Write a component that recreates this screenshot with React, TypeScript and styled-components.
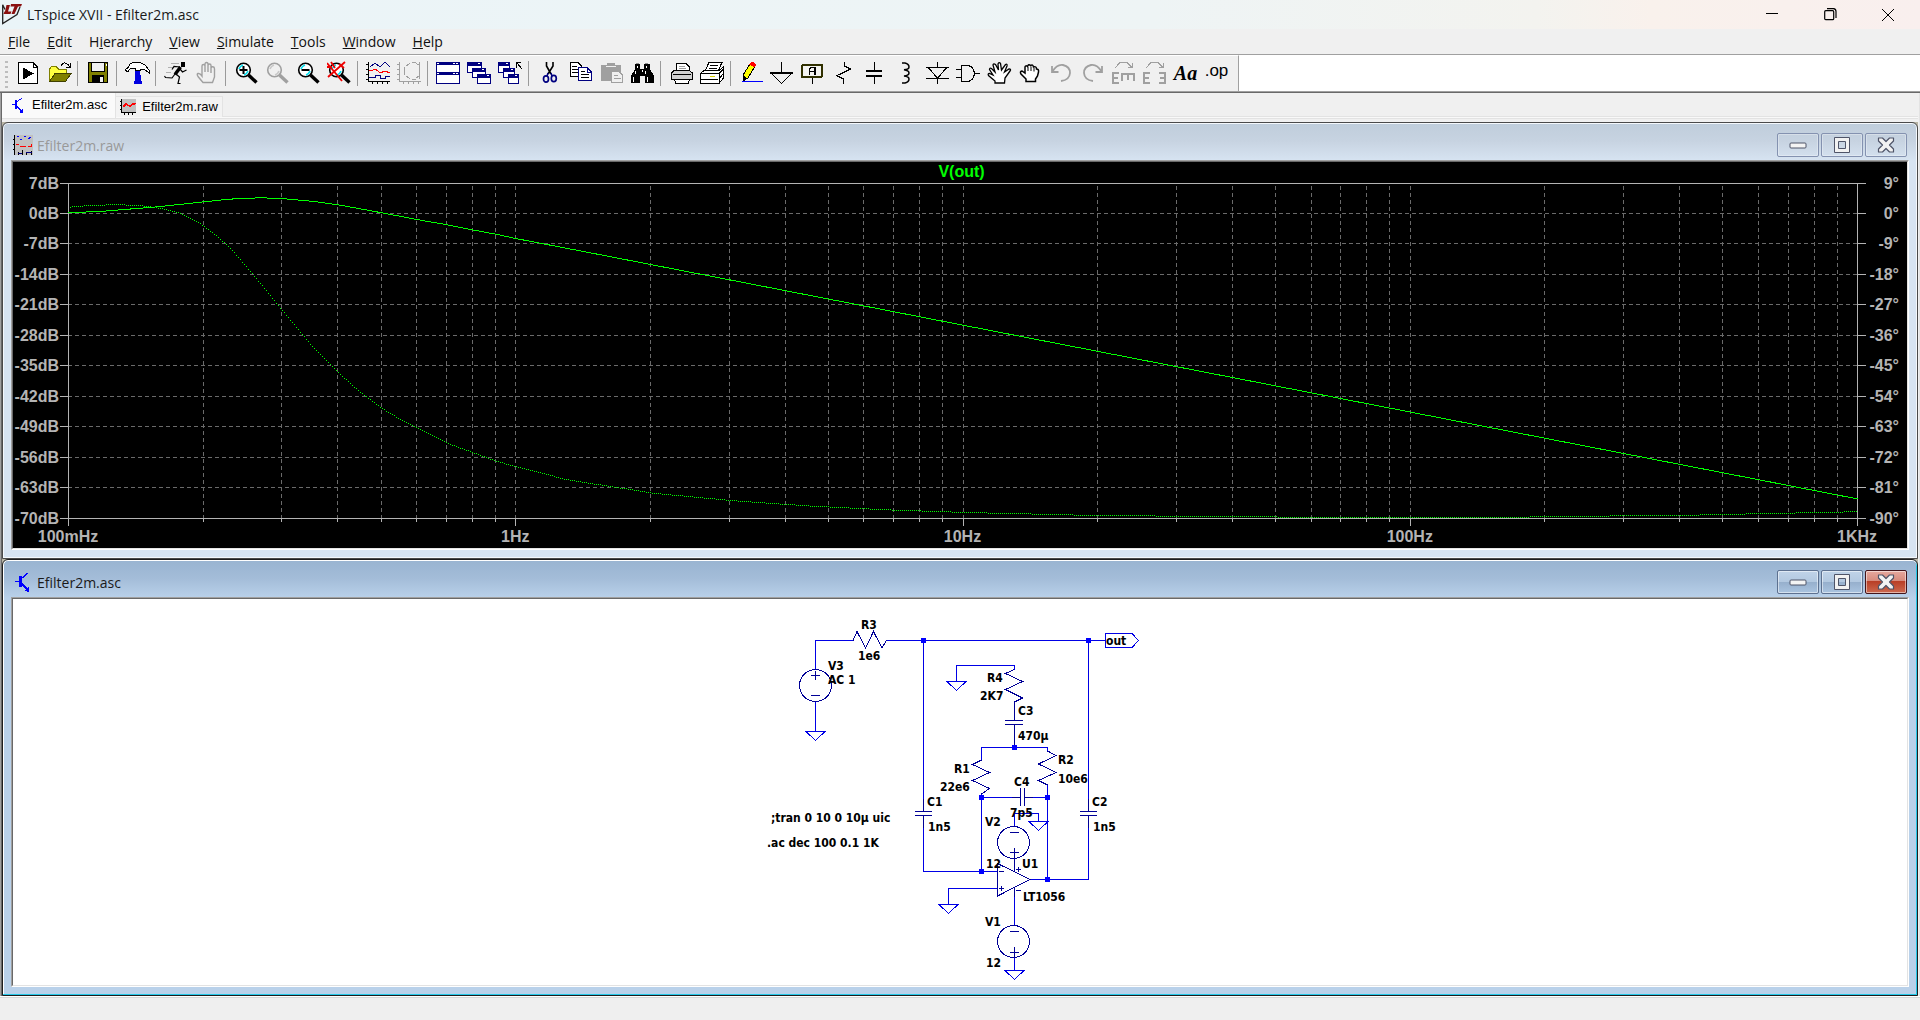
import React, { useLayoutEffect, useRef, useState } from 'react';
import styled, { createGlobalStyle, css } from 'styled-components';

const uiFont = '"Open Sans", "Noto Sans", sans-serif';
const arial = '"Liberation Sans", Arial, sans-serif';

const GlobalStyle = createGlobalStyle`
  * { box-sizing: border-box; }
  body { margin: 0; background: #f0f0f0; font-family: ${uiFont}; overflow: hidden; }
  button { font: inherit; color: inherit; margin: 0; padding: 0; border: 0; background: none; }
  svg { display: block; }
`;

/* ---------- application frame ---------- */

const App = styled.div`
  display: flex;
  flex-direction: column;
  height: 100vh;
  background: #f0f0f0;
`;

const TitleBar = styled.header`
  display: flex;
  align-items: center;
  flex: none;
  height: 29px;
  padding-left: 2px;
  background: linear-gradient(90deg, #eaf4f8 0%, #eef4f5 60%, #f3f3ef 80%, #f9f1ec 86%, #f9efee 100%);
`;

const AppTitle = styled.h1`
  flex: 1;
  margin: 0;
  padding-left: 5px;
  font-size: 14px;
  line-height: 20px;
  font-weight: 400;
  color: #1a1a1a;
`;

const FrameButton = styled.button`
  display: grid;
  place-items: center;
  width: 58px;
  height: 29px;
`;

const FrameButtons = styled.div`
  display: flex;
  padding-right: 3px;
`;

const MenuBar = styled.nav`
  display: flex;
  flex: none;
  height: 26px;
  border-bottom: 1px solid #a0a0a0;
`;

const MenuButton = styled.button`
  padding: 0 9px 0 8px;
  font-size: 14px;
  line-height: 25px;
  color: #111;
`;

const ToolRow = styled.div`
  display: flex;
  flex: none;
  height: 38px;
  background: #fff;
  border-bottom: 1px solid #696969;
  box-shadow: inset 0 -1px 0 #a0a0a0;
`;

const ToolBar = styled.div`
  display: flex;
  height: 36px;
  padding: 5px 6px 0 13px;
  background: #f0f0f0;
  border-top: 1px solid #fff;
  border-right: 1px solid #a0a0a0;
`;

const Grip = styled.span`
  width: 3px;
  height: 28px;
  margin: 0 5px 0 -8px;
  background: repeating-linear-gradient(180deg, #bdbdbd 0 2px, transparent 2px 5px);
`;

const ToolButton = styled.button`
  display: flex;
  justify-content: center;
  width: 31px;
  height: 25px;
`;

const Separator = styled.span`
  width: 8px;
  height: 25px;
  padding-left: 2px;
  &::before { content: ''; display: block; width: 1px; height: 25px; background: #9a9a9a; }
`;

const GlyphText = styled.span<{ $italic?: boolean }>`
  color: #000;
  ${(p) =>
    p.$italic
      ? css`font: italic 700 20px/25px "Liberation Serif", "Times New Roman", serif;`
      : css`font: 400 17px/20px "Liberation Sans", Arial, sans-serif;`}
`;

const Client = styled.main`
  display: flex;
  flex-direction: column;
  flex: 1;
  min-height: 0;
  border-left: 1px solid #a0a0a0;
  border-right: 1px solid #e3e3e3;
  box-shadow: inset 1px 0 0 #696969;
  padding: 0 1px;
`;

const TabStrip = styled.div`
  display: flex;
  align-items: flex-start;
  flex: none;
  height: 29px;
  background: linear-gradient(#f0f0f0 23px, #e3e3e3 23px 24px, #f9f9f9 24px 25px, #e3e3e3 25px 26px, #f0f0f0 26px);
`;

const Tab = styled.button<{ $active?: boolean }>`
  display: flex;
  align-items: center;
  gap: 6px;
  padding: 0 4px;
  font: 13px/20px ${arial};
  color: #000;
  ${(p) =>
    p.$active
      ? css`height: 25px; padding: 0 8px 2px 8px; background: #fafafa; border-right: 1px solid #e3e3e3;`
      : css`height: 21px; margin-top: 3px; background: #f3f3f3; border: solid #e3e3e3; border-width: 1px 1px 0 0;`}
`;

const Workspace = styled.div`
  display: grid;
  grid-template-rows: 1fr 1fr;
  flex: 1;
  min-height: 0;
  background: #b9b5a5;
`;

const StatusBar = styled.footer`
  flex: none;
  height: 24px;
  border-top: 1px solid #fff;
  box-shadow: inset 0 1px 0 #d8d8d8;
  background: #efefef;
`;

/* ---------- child windows ---------- */

const ChildWindow = styled.section<{ $active?: boolean }>`
  display: flex;
  flex-direction: column;
  min-height: 0;
  padding: 1px 8px 8px;
  border: 1px solid ${(p) => (p.$active ? '#1e1e1e' : '#4a4a4a')};
  border-radius: 6px 6px 0 0;
  ${(p) =>
    p.$active
      ? css`
          background: linear-gradient(#99b4d1 0, #a3bcd8 18px, #b9d1ea 38px, #b9d1ea 100%);
          box-shadow: inset 0 1px 0 #fff, inset -1px -1px 0 #24c8e8, inset 1px 0 0 #fff;
        `
      : css`
          background: linear-gradient(#bfcddb 0, #c7d3e1 18px, #d7e4f2 38px, #d7e4f2 100%);
          box-shadow: inset 0 0 0 1px #f4f8fc;
        `}
`;

const ChildTitleBar = styled.div`
  display: flex;
  flex: none;
  height: 36px;
  padding: 9px 2px 0;
`;

const ChildTitle = styled.h2<{ $active?: boolean }>`
  flex: 1;
  margin: 0;
  padding-left: 4px;
  font-size: 14px;
  line-height: 25px;
  font-weight: 400;
  color: ${(p) => (p.$active ? '#1a1a1a' : '#999')};
`;

const ChildIcon = styled.span`
  padding-top: 2px;
`;

const ChildButtons = styled.div`
  display: flex;
  gap: 2px;
`;

const ChildButton = styled.button<{ $active?: boolean; $close?: boolean }>`
  display: grid;
  place-items: center;
  width: 42px;
  height: 24px;
  border-radius: 2px;
  border: 1px solid #8492b0;
  box-shadow: inset 0 0 0 1px rgba(255, 255, 255, 0.3);
  ${(p) =>
    p.$active &&
    css`
      border-color: #5d7190;
      background: linear-gradient(#c0d3e8 0, #b2c8e0 11px, #96afcc 11px, #aac4e0 100%);
      box-shadow: inset 0 0 0 1px rgba(255, 255, 255, 0.5);
    `}
  ${(p) =>
    p.$active &&
    p.$close &&
    css`
      border-color: #43141a;
      background: linear-gradient(#e6a89e 0, #d68a7c 10px, #b83d25 10px, #cc6a50 100%);
    `}
`;

const Canvas = styled.div<{ $dark?: boolean }>`
  display: flex;
  justify-content: center;
  flex: 1;
  min-height: 0;
  min-width: 0;
  overflow: hidden;
  background: ${(p) => (p.$dark ? '#000' : '#fff')};
  border: 1px solid #696969;
  border-right-color: #e3e3e3;
  border-bottom-color: #e3e3e3;
`;

const SunkenEdge = styled.div`
  display: flex;
  flex: 1;
  min-height: 0;
  border: 1px solid #a0a0a0;
  border-right-color: #fff;
  border-bottom-color: #fff;
`;

/* ---------- toolbar icons ---------- */

const K = '#000';
const G = '#a0a0a0';
const N = '#000080';

const Icon = ({ children, smooth }: { children: React.ReactNode; smooth?: boolean }) => (
  <svg width="25" height="25" viewBox="0 0 25 25" fill="none" shapeRendering={smooth ? 'auto' : 'crispEdges'}>
    {children}
  </svg>
);

const Lens = ({ color = K, glint = '#00e0f0', mark }: { color?: string; glint?: string; mark?: React.ReactNode }) => (
  <Icon smooth>
    <circle cx="9.5" cy="9" r="6.8" stroke={color} strokeWidth="1.6" fill={color === K ? '#fff' : 'none'} />
    <path d="M5 8q1-3 4-4M14 10q-1 3-4 4" stroke={glint} strokeWidth="1.6" />
    <path d="M14.500 14l8 7.500" stroke={color} strokeWidth="3.4" />
    {mark}
  </Icon>
);

const Axes = ({ color }: { color: string }) => (
  <path d="M2.500 1v20M2 20.500h22M0 3.500h2M0 8.500h2M0 13.500h2M0 18.500h2M6.500 20v3M11.500 20v3M16.500 20v3M21.500 20v3" stroke={color} />
);

const MiniWindow = ({ x, y, w, h }: { x: number; y: number; w: number; h: number }) => (
  <g>
    <rect x={x + 0.5} y={y + 0.5} width={w - 1} height={h - 1} fill="#fff" stroke={N} />
    <rect x={x} y={y} width={w} height="4" fill={N} />
    <path d={`M${x + w - 4} ${y + 1.5}h2`} stroke="#fff" />
  </g>
);

const OpenHand = ({ color, fill }: { color: string; fill: string }) => (
  <path
    d="M8 21.500L3 15.500Q1.500 13 3 12.500Q5 12 7 15V5Q7 3.500 8.500 3.500Q10 3.500 10 5V3Q10 1.500 11.500 1.500Q13 1.500 13 3V4.500Q13 3 14.500 3Q16 3 16 4.500V7Q16.500 5.500 18 5.800Q19.500 6 19.500 8V16L17.500 21.500ZM10 5V11M13 4.500V11M16 7V12"
    stroke={color}
    strokeWidth="1.400"
    fill={fill}
  />
);

const icons: Record<string, React.ReactNode> = {
  New: (
    <Icon>
      <path d="M2.500 1.500H17L21.500 6V22.500H2.500Z" fill="#fff" stroke={K} />
      <path d="M17 1.500V6H21.500" stroke={K} />
      <path d="M7 6.500V18.500L18 12.500Z" fill={K} />
    </Icon>
  ),
  Open: (
    <Icon>
      <path d="M2.500 20V8L4.500 5.500H9L11.500 8H19.500V13" fill="#ffff40" stroke="#808000" />
      <path d="M2.500 20.500L8 12.500H24L18.500 20.500Z" fill="#808000" stroke="#404000" />
      <path d="M14 4.500Q17 0 21 3.500L22.500 6M23.500 2V6.500H18.500" stroke={K} />
    </Icon>
  ),
  Save: (
    <Icon>
      <rect x="2.500" y="1.500" width="19" height="20" fill="#808000" stroke={K} />
      <rect x="5.500" y="1.500" width="13" height="9" fill="#f0f0f0" stroke={K} />
      <rect x="6" y="14" width="12" height="8" fill={K} />
      <rect x="14" y="16" width="3" height="5" fill="#f0f0f0" />
      <rect x="20" y="3" width="1" height="2" fill="#fff" />
    </Icon>
  ),
  'Control Panel': (
    <Icon>
      <path d="M10 9h5v5h1v6h1v3H9v-3h1v-6Z" fill="#0000e0" />
      <path d="M0.500 8.500L3 6.500L5 3L8 1.500H15L20 4L24 9V12L21.500 10L18 8H15V9.500H10V7.500L6 7L3 10.500H1.500Z" fill="#fff" stroke={K} />
    </Icon>
  ),
  Run: (
    <Icon smooth>
      <path d="M7 2.500h8M4 6.500h6M2 11.500h5" stroke="#b0b0b0" />
      <rect x="17" y="1" width="4" height="5" fill={K} />
      <path d="M16.500 6L11 13.500" stroke={K} strokeWidth="3.400" />
      <path d="M16 6L10 5.500L8 8.500M16 8L18.500 11L22.500 9M12 13L15.500 16L14 22.500H16.500M11 13L8 17L1.500 16.500L0.500 15" stroke={K} strokeWidth="1.200" />
    </Icon>
  ),
  Halt: (
    <Icon smooth>
      <OpenHand color={G} fill="none" />
    </Icon>
  ),
  'Zoom In': <Lens mark={<path d="M5.500 9h8M9.500 5v8" stroke={K} strokeWidth="2" />} />,
  'Pan View': <Lens color={G} glint="#c8c8c8" />,
  'Zoom Out': <Lens mark={<path d="M5.500 9h8" stroke={K} strokeWidth="2" />} />,
  'Zoom Full': (
    <Lens mark={<path d="M0 2L15 20M18 1L1 16M0 6h5M12 3l5 4M4 1l4 6" stroke="#f00000" strokeWidth="1.800" />} />
  ),
  Autorange: (
    <Icon>
      <Axes color={K} />
      <path d="M4 6L9 2L14 6L19 1L24 6" stroke={N} />
      <path d="M3 9.500H6L9 8L14 11.500L19 10.500L24 11.500" stroke="#f00" />
      <path d="M3 16.500H9V14.500H14V17.500H19V15.500H24" stroke={N} />
    </Icon>
  ),
  FFT: (
    <Icon>
      <Axes color={G} />
      <path d="M22.500 1V18M22 4L19 2.500M19 1.500H15M13 2.500L9 5M7.500 6V14M9 15L13 17.500M15 18.500H19M19 17L22 15" stroke={G} />
    </Icon>
  ),
  Tile: (
    <Icon>
      <rect x="0.500" y="1.500" width="23" height="21" fill="#fff" stroke={N} />
      <path d="M0 2.500h24M0 12.500h24" stroke={N} strokeWidth="3" />
      <path d="M1 2.500h2M17 2.500h2M20 2.500h2M1 12.500h2M17 12.500h2M20 12.500h2" stroke="#fff" />
    </Icon>
  ),
  Cascade: (
    <Icon>
      <MiniWindow x={0} y={1} w={15} h={11} />
      <MiniWindow x={5} y={7} w={14} h={10} />
      <MiniWindow x={10} y={13} w={14} h={10} />
    </Icon>
  ),
  'Close All': (
    <Icon>
      <MiniWindow x={0} y={1} w={12} h={11} />
      <MiniWindow x={5} y={7} w={12} h={10} />
      <MiniWindow x={10} y={13} w={11} h={10} />
      <path d="M18.500 7V1.500H23M18.500 1.500L24 8" stroke={K} />
    </Icon>
  ),
  Cut: (
    <Icon smooth>
      <path d="M9.500 1V5L14 13M16 1V5L11 13" stroke={K} strokeWidth="1.600" />
      <path d="M11 12L10 15M14 12L15 15" stroke={N} strokeWidth="1.500" />
      <ellipse cx="9" cy="18" rx="2.500" ry="3.200" stroke={N} strokeWidth="1.700" />
      <ellipse cx="16.800" cy="17.500" rx="2.500" ry="3.200" stroke={N} strokeWidth="1.700" />
    </Icon>
  ),
  Copy: (
    <Icon>
      <path d="M2.500 1.500H10L13.500 5V15.500H2.500Z" fill="#fff" stroke={K} />
      <path d="M4 5.500h5M4 8.500h7M4 11.500h7" stroke={K} />
      <path d="M10.500 6.500H19L23.500 11V19.500H10.500Z" fill="#fff" stroke={N} />
      <path d="M19 6.500V11H23.500" stroke={N} />
      <path d="M13 10.500h4M13 13.500h8M13 16.500h8" stroke={K} />
    </Icon>
  ),
  Paste: (
    <Icon>
      <path d="M2 4H8V2H16V4H22V20H2Z" fill={G} />
      <path d="M7 5.500h10" stroke="#f0f0f0" />
      <path d="M12.500 10.500H20L23.500 14V21.500H12.500Z" fill="#f0f0f0" stroke={G} />
      <path d="M15 14.500h4M15 17.500h7" stroke={G} />
    </Icon>
  ),
  Find: (
    <Icon>
      <path d="M5 3H10V8H14V3H20V8L24 15V22H15V15H10V22H1V15L5 8Z" fill={K} />
      <path d="M6 2.500h3M15 2.500h3" stroke="#909090" />
      <path d="M7.500 5v2M16.500 5v2M5.500 10v3M15.500 10v3M3.500 16v5M17.500 16v5M12.500 9v2" stroke="#fff" />
    </Icon>
  ),
  Print: (
    <Icon>
      <path d="M7.500 9.500V2.500H17L20.500 6V10" fill="#fff" stroke={K} />
      <path d="M10 5.500h6M10 7.500h7" stroke={G} />
      <path d="M2.500 12L5 9.500H20.500L23.500 12V18.500H2.500Z" fill="#d0d0d0" stroke={K} />
      <path d="M4 13.500h18" stroke={K} />
      <path d="M5.500 18.500L7 22.500H19L20.500 18.500Z" fill="#fff" stroke={K} />
    </Icon>
  ),
  'Print Setup': (
    <Icon>
      <path d="M5 10L9 1.500H22L18 10Z" fill="#fff" stroke={K} />
      <path d="M10 4.500h8M9 7.500h8" stroke={K} />
      <path d="M0.500 12.500L4 9.500H19L23.500 6V17L19 22.500H0.500Z" fill="#fff" stroke={K} />
      <path d="M0.500 12.500H19V22M19 12.500L23.500 8M1 18.500H18M19 18L23 13" stroke={K} />
      <path d="M10 15.500h5" stroke="#d8d000" />
    </Icon>
  ),
  Wire: (
    <Icon>
      <path d="M4 20V14L11 3L15.500 6L9 17Z" fill="#ff0" stroke={K} />
      <path d="M4 20V14L8 17Z" fill={K} />
      <path d="M10.500 3.500L12 1H15L16.500 3V5L15 6.500Z" fill="#f00" />
      <path d="M3 20.500H24" stroke="#00f" />
    </Icon>
  ),
  Ground: (
    <Icon>
      <path d="M11.500 1V12M0 12H23M1 12L11.500 22.500L22 12" stroke={K} strokeWidth="1.400" />
    </Icon>
  ),
  'Label Net': (
    <Icon>
      <rect x="1" y="4" width="20" height="12" rx="1" stroke="#303000" strokeWidth="2" fill="#f4f4f0" />
      <path d="M8.500 14V8L10 6.500H13V14M9 10.500H13M14.500 6V14" stroke={K} />
      <path d="M11.500 17V23" stroke={K} />
    </Icon>
  ),
  Resistor: (
    <Icon>
      <path d="M12.500 1V5L19 8L5 14.500L11.500 18V23" stroke={K} strokeWidth="1.300" />
    </Icon>
  ),
  Capacitor: (
    <Icon>
      <path d="M11.500 1V9M11.500 16V23" stroke={K} />
      <path d="M3 10H19M3 15H19" stroke={K} strokeWidth="2" />
    </Icon>
  ),
  Inductor: (
    <Icon smooth>
      <path d="M8 2H11Q15 3 15 6Q15 8.500 10 8.800Q15 9.500 15 12Q15 14.500 10 15Q15 15.500 15 18Q15 21 11 22H8" stroke={K} strokeWidth="1.500" />
    </Icon>
  ),
  Diode: (
    <Icon>
      <path d="M12.500 1V6M1 6.500H24M3 6.500L12.500 17L22 6.500M1 17.500H24M12.500 17V23" stroke={K} strokeWidth="1.200" />
    </Icon>
  ),
  Component: (
    <Icon>
      <path d="M5.500 4.500H12Q18 6 18.500 12.500Q18 19 12 20.500H5.500Z" stroke={K} strokeWidth="1.200" />
      <path d="M0 8.500H5M0 16.500H5M18 12.500H24" stroke={K} />
    </Icon>
  ),
  Move: (
    <Icon smooth>
      <path
        d="M8 22L8 20L1.500 14.500Q0.500 12.500 2.500 12.500L6 14L2.500 8.500Q2.500 6.500 4.500 7.500L8 11L6 4Q6.500 2 8.500 3.500L11.500 9L11 3Q12 0.500 13.500 2.500L14.500 9L18.500 3.500Q20.500 2.500 20 5L17.500 11L22 8Q24.500 8 23 10L18 17L17.500 22Z"
        fill="#fff"
        stroke={K}
        strokeWidth="1.300"
      />
    </Icon>
  ),
  Drag: (
    <Icon smooth>
      <path
        d="M8 20.500V18L3 13Q1.500 10.500 4 10L7 12V6Q7.500 4 9.500 5.500Q10.500 2.500 12.500 4.500Q15 3 15.500 6Q18.500 5 18.500 8Q21 8 20.500 11L19.500 15L17.500 18V20.500Z"
        fill="#fff"
        stroke={K}
        strokeWidth="1.500"
      />
      <path d="M10 6V10M13 5.500V10M16 7V10.500" stroke={K} />
    </Icon>
  ),
  Undo: (
    <Icon smooth>
      <path d="M3 5V11H9.500M3.500 10.500Q8 3 14 4Q21 5.500 21 12Q20.500 19 12 20" stroke={G} strokeWidth="1.800" />
    </Icon>
  ),
  Redo: (
    <Icon smooth>
      <path d="M22 5V11H15.500M21.500 10.500Q17 3 11 4Q4 5.500 4 12Q4.500 19 13 20" stroke={G} strokeWidth="1.800" />
    </Icon>
  ),
  Rotate: (
    <Icon>
      <path d="M2 11V23M2 12H8M2 17H7M2 22H8M10 13H24M11 13V20M17 13V19M23 13V20" stroke={G} strokeWidth="2" />
      <path d="M4 7L9 1.500H16L20.500 6M21.500 2V6.500H17" stroke={G} />
    </Icon>
  ),
  Mirror: (
    <Icon>
      <path d="M2 11V23M2 12H8M2 17H7M2 22H8M23 11V23M23 12H17M23 17H18M23 22H17" stroke={G} strokeWidth="2" />
      <path d="M4 7L9 1.500H16L20.500 6M21.500 2V6.500H17" stroke={G} />
    </Icon>
  ),
  Text: <GlyphText $italic>Aa</GlyphText>,
  'SPICE Directive': <GlyphText>.op</GlyphText>,
};

const toolGroups = [
  ['New', 'Open'],
  ['Save'],
  ['Control Panel'],
  ['Run', 'Halt'],
  ['Zoom In', 'Pan View', 'Zoom Out', 'Zoom Full'],
  ['Autorange', 'FFT'],
  ['Tile', 'Cascade', 'Close All'],
  ['Cut', 'Copy', 'Paste', 'Find'],
  ['Print', 'Print Setup'],
  ['Wire', 'Ground', 'Label Net', 'Resistor', 'Capacitor', 'Inductor', 'Diode', 'Component', 'Move', 'Drag', 'Undo', 'Redo', 'Rotate', 'Mirror', 'Text', 'SPICE Directive'],
];

const menus: [string, number][] = [
  ['File', 0], ['Edit', 0], ['Hierarchy', 1], ['View', 0], ['Simulate', 0], ['Tools', 0], ['Window', 0], ['Help', 0],
];

/* ---------- document icons ---------- */

const TransistorIcon = ({ size }: { size: number }) => (
  <svg width={size} height={size} viewBox="0 0 20 20" fill="none" stroke="#00f" shapeRendering="crispEdges">
    <path d="M2 9.500H7M8 7L15 1" strokeWidth="1.200" />
    <path d="M7.500 4V15" strokeWidth="3" />
    <path d="M9 12L15 18" strokeWidth="1.500" />
    <path d="M16 20V15L11 19Z" fill="#00f" stroke="none" />
  </svg>
);

const TraceIcon = () => (
  <svg width="16" height="16" viewBox="0 0 16 16" fill="none" shapeRendering="crispEdges">
    <rect x="2" y="0" width="14" height="13" fill="#c0c0c0" />
    <path d="M1.500 0V14M1 13.500H16M0 2.500h1M0 6.500h1M0 10.500h1M4.500 14v2M8.500 14v2M12.500 14v2" stroke="#000" />
    <path d="M3 8L6 5L10 7.500L13 5L16 4.500" stroke="#f00" strokeWidth="1.500" />
  </svg>
);

const WaveformIcon = () => (
  <svg width="20" height="20" viewBox="0 0 20 20" fill="none" shapeRendering="crispEdges">
    <rect x="1" width="19" height="20" fill="#c0c0c0" />
    <path d="M1.500 0V20M0 4.500h1M0 9.500h1M0 14.500h1M5.500 17v3M9.500 15v5M13.500 17v3M18.500 16v4" stroke="#000" />
    <path d="M4 2L6 1M7 4L9 5M11 2L13 1M15 4L18 2" stroke="#00f" />
    <path d="M3 9.500H6M7 11.500H13M15 11.500H18V9" stroke="#f00" />
    <path d="M5 18.500H9M13 17.500H19" stroke="#000080" />
  </svg>
);

const LogoIcon = () => (
  <svg width="20" height="21" viewBox="0 0 20 21" fill="none">
    <path d="M3 5.500L0.700 0.800V19.500L15 10.500L18 3" stroke="#222" strokeWidth="1.300" />
    <path d="M4.500 1H8L6 7.500H9.500L8.500 10H1.500L2.500 7.500H3Z" fill="#8a1010" />
    <path d="M9 0H20L19 2.500H16L12.500 10H9.500L12.500 2.500H8.500Z" fill="#8a1010" />
  </svg>
);

const MinimizeGlyph = () => (
  <svg width="18" height="8" viewBox="0 0 18 8"><rect x="1" y="2" width="16" height="5" rx="1" fill="#f4f4f4" stroke="#4f5468" /></svg>
);

const MaximizeGlyph = () => (
  <svg width="18" height="16" viewBox="0 0 18 16">
    <path d="M1.500 0.500H16.500V15.500H1.500ZM5.500 4.500V11.500H12.500V4.500Z" fill="#f2f2f2" stroke="#4f5468" fillRule="evenodd" />
  </svg>
);

const CloseGlyph = () => (
  <svg width="18" height="16" viewBox="0 0 18 16">
    <path d="M1.500 1H5.500L9 4.500L12.500 1H16.500V4L12.500 8L16.500 12V15H12.500L9 11.500L5.500 15H1.500V12L5.500 8L1.500 4Z" fill="#f2f2f2" stroke="#4f5468" strokeWidth="1.200" strokeLinejoin="round" />
  </svg>
);

/* ---------- bode plot ---------- */

type Sample = [number, number];

const gain: Sample[] = [
  [0, 0.26], [0.078, 0.63], [0.199, 1.64], [0.303, 2.79], [0.35, 3.3], [0.387, 3.6], [0.434, 3.7], [0.476, 3.55], [0.55, 2.86],
  [0.603, 2.1], [0.701, 0.26], [0.779, -1.28], [0.847, -2.5], [0.903, -3.65], [0.956, -4.66], [1, -5.65], [1.19, -9.39],
  [4, -65.5],
];

const phase: Sample[] = [
  [0, 2], [0.04, 2.4], [0.092, 2.7], [0.157, 2.6], [0.203, 1.7], [0.25, 0.2], [0.288, -2.3], [0.303, -3.7], [0.331, -6.5],
  [0.361, -10], [0.4, -15.9], [0.421, -19.2], [0.45, -23.9], [0.477, -28.3], [0.52, -35.1], [0.551, -40], [0.603, -46.9],
  [0.652, -52.6], [0.701, -57.5], [0.746, -61], [0.779, -63.3], [0.847, -67.8], [0.904, -70.5], [0.956, -73.1], [1, -74.6],
  [1.063, -76.8], [1.114, -78.5], [1.19, -80.1], [1.312, -82.6], [1.491, -84.8], [1.655, -86.3], [1.82, -87.4], [2, -88.2],
  [2.258, -89], [2.587, -89.5], [3, -89.7], [3.24, -89.6], [3.41, -89.3], [3.6, -89.1], [3.7, -88.8], [3.85, -88.4], [4, -88],
];

const sampleAt = (points: Sample[], t: number) => {
  const i = Math.max(1, points.findIndex(([d]) => d >= t));
  const [d0, v0] = points[i - 1];
  const [d1, v1] = points[i];
  return v0 + ((v1 - v0) * (t - d0)) / (d1 - d0);
};

const decades = ['100mHz', '1Hz', '10Hz', '100Hz', '1KHz'];

const PlotText = styled.text`
  font: 700 16px ${arial};
  fill: #b4b4b4;
`;

const TraceLabel = styled(PlotText)`
  fill: #00ff00;
`;

function BodePlot() {
  const host = useRef<HTMLDivElement>(null);
  const [size, setSize] = useState({ w: 1894, h: 385 });
  useLayoutEffect(() => {
    const el = host.current;
    if (!el) return;
    const measure = () => setSize({ w: el.clientWidth, h: el.clientHeight });
    measure();
    const watcher = new ResizeObserver(measure);
    watcher.observe(el);
    return () => watcher.disconnect();
  }, []);

  const left = 55;
  const top = 21;
  const right = size.w - 50;
  const bottom = size.h - 30;
  const px = (decade: number) => left + ((right - left) * decade) / 4;
  const row = (n: number) => Math.floor(top + ((bottom - top) * n) / 11);
  const py = (v: number, max: number, step: number) => top + 0.5 + ((max - v) / step / 11) * (bottom - top);

  const gainLine = gain.map(([d, v]) => `${px(d) + 0.5},${py(v, 7, 7)}`).join(' ');
  let phaseDots = '';
  for (let x = left + 2; x < right; x += 2) {
    const v = sampleAt(phase, ((x - left) / (right - left)) * 4);
    phaseDots += `M${x} ${Math.floor(py(v, 9, 9)) + 0.5}h1`;
  }

  const minor: number[] = [];
  for (let d = 0; d < 4; d++) for (let k = 2; k < 10; k++) minor.push(Math.round(px(d + Math.log10(k))));

  return (
    <Canvas $dark ref={host}>
      <svg width={size.w} height={size.h} fill="none" shapeRendering="crispEdges">
        <g stroke="#6a6a6a" strokeDasharray="4 3">
          {minor.map((x) => <path key={x} d={`M${x + 0.5} ${top + 3}V${bottom}`} />)}
          {[1, 2, 3].map((d) => <path key={d} d={`M${Math.round(px(d)) + 0.5} ${top + 3}V${bottom}`} />)}
          {[1, 2, 3, 4, 5, 6, 7, 8, 9, 10].map((n) => <path key={n} d={`M${left} ${row(n) + 0.5}H${right}`} />)}
        </g>
        <g stroke="#b4b4b4">
          <path d={`M${left + 0.5} ${top}V${bottom + 8}M${right + 0.5} ${top}V${bottom + 8}`} />
          <path d={`M${left} ${top + 0.5}H${right}M${left} ${bottom + 0.5}H${right}`} />
          {minor.map((x) => <path key={x} d={`M${x + 0.5} ${bottom}v4`} />)}
          {[1, 2, 3].map((d) => <path key={d} d={`M${Math.round(px(d)) + 0.5} ${bottom}v8`} />)}
          {Array.from({ length: 12 }, (_, n) => (
            <path key={n} d={`M${left - 8} ${row(n) + 0.5}h8M${right} ${row(n) + 0.5}h9`} />
          ))}
        </g>
        <polyline points={gainLine} stroke="#00ff00" />
        <path d={phaseDots} stroke="#00ff00" />
        <TraceLabel x={(left + right) / 2 - 1} y="15" textAnchor="middle">V(out)</TraceLabel>
        {Array.from({ length: 12 }, (_, n) => (
          <React.Fragment key={n}>
            <PlotText x={left - 9} y={row(n) + 6} textAnchor="end">{`${7 - 7 * n}dB`}</PlotText>
            <PlotText x={right + 42} y={row(n) + 6} textAnchor="end">{`${9 - 9 * n}°`}</PlotText>
          </React.Fragment>
        ))}
        {decades.map((name, d) => (
          <PlotText key={name} x={px(d)} y={bottom + 24} textAnchor="middle">{name}</PlotText>
        ))}
      </svg>
    </Canvas>
  );
}

/* ---------- schematic ---------- */

const SchematicText = styled.text`
  font: condensed 700 12px "DejaVu Sans Condensed", "DejaVu Sans", sans-serif;
  fill: #000;
`;

const wires = [
  'M93 41.500H55.500V70.500M55.500 102V132M127 41.500H345',
  'M196.500 82V66.500H254.500V70.500',
  'M221.500 161V148.500H287.500V152',
  'M221.500 195V272.500M221.500 198.500H252M273 198.500H287.500M287.500 186V280.500',
  'M163.500 41.500V200M163.500 229V272.500H238M328.500 41.500V200M328.500 229V280.500H270',
  'M238 289.500H188.500V305',
  'M254.500 227V214.500H278.500V222M254.500 298V326M254.500 358V371',
  'M345.500 34.500H372L378.500 41.500L372 48.500H345.500Z',
];

const grounds = [[55.5, 132.5], [196.5, 82.5], [188.5, 305.5], [278.5, 222.5], [254.5, 371.5]];
const junctions = [[163, 41], [328, 41], [254, 148], [221, 198], [287, 198], [221, 272], [287, 280]];

const symbols = [
  'M93 41.500L97 32.500L105.500 49L113.500 32.500L122 49L126.500 41.500',
  'M254.500 70.500L245.500 74.500L262.500 82.500L245.500 90.500L262.500 99L254.500 103V121',
  'M245 121.500H263M245 125.500H263M254.500 125V148',
  'M221.500 161L212.500 165.500L229.500 173.500L212.500 181.500L229.500 189.500L221.500 195',
  'M287.500 152L296 156.500L278.500 165L296 173.500L278.500 181.500L287.500 186',
  'M252 198.500H260.500M264.500 198.500H273M260.500 189V207M264.500 189V207',
  'M163.500 200V212M155 212.500H172M155 216.500H172M163.500 217V229',
  'M328.500 200V212M320 212.500H337M320 216.500H337M328.500 217V229',
  'M237.500 264.500L270 280.500L237.500 297Z',
  'M239 272.500H244M239 289.500H244M241.500 287V292',
  'M256 270.500H261M258.500 268V273M256 291.500H261',
  'M51 76.500H60M55.500 72V81M51 96.500H60',
  'M250 233.500H259M250 253.500H259M254.500 249V272M254.500 288V298',
  'M250 332.500H259M250 353.500H259M254.500 348V359',
];

const sources = [[55.5, 86.5], [253.5, 243.5], [253.5, 342.5]];

const labels: [string, number, number][] = [
  ['R3', 101, 30], ['1e6', 98, 61], ['V3', 68, 71], ['AC 1', 68, 85], ['out', 346, 46], ['R4', 227, 83], ['2K7', 220, 101],
  ['C3', 258, 116], ['470µ', 258, 141], ['R1', 194, 174], ['22e6', 180, 192], ['R2', 298, 165], ['10e6', 298, 184],
  ['C4', 254, 187], ['7p5', 250, 218], ['C1', 167, 207], ['1n5', 168, 232], ['C2', 332, 207], ['1n5', 333, 232],
  ['V2', 225, 227], ['12', 226, 269], ['U1', 262, 269], ['LT1056', 263, 302], ['V1', 225, 327], ['12', 226, 368],
  [';tran 0 10 0 10µ uic', 11, 223], ['.ac dec 100 0.1 1K', 7, 248],
];

const Schematic = () => (
  <svg width="400" height="386" viewBox="0 0 400 386" fill="none" shapeRendering="crispEdges">
    <g stroke="#0000e6">
      {wires.map((d) => <path key={d} d={d} />)}
      {grounds.map(([x, y]) => <path key={`${x}-${y}`} d={`M${x - 9.5} ${y}H${x + 9.5}L${x} ${y + 9}Z`} />)}
    </g>
    <g stroke="#000096">
      {symbols.map((d) => <path key={d} d={d} />)}
      {sources.map(([x, y]) => <circle key={y} cx={x} cy={y} r="16" />)}
    </g>
    {junctions.map(([x, y]) => <rect key={`${x}-${y}`} x={x - 2} y={y - 2} width="5" height="5" fill="#0000ff" />)}
    {labels.map(([text, x, y]) => <SchematicText key={`${x}-${y}`} x={x} y={y}>{text}</SchematicText>)}
  </svg>
);

/* ---------- composition ---------- */

type DocumentProps = { title: string; icon: React.ReactNode; active?: boolean; children: React.ReactNode };

const DocumentWindow = ({ title, icon, active, children }: DocumentProps) => (
  <ChildWindow $active={active}>
    <ChildTitleBar>
      <ChildIcon>{icon}</ChildIcon>
      <ChildTitle $active={active}>{title}</ChildTitle>
      <ChildButtons>
        <ChildButton $active={active} aria-label={`Minimize ${title}`}><MinimizeGlyph /></ChildButton>
        <ChildButton $active={active} aria-label={`Maximize ${title}`}><MaximizeGlyph /></ChildButton>
        <ChildButton $active={active} $close aria-label={`Close ${title}`}><CloseGlyph /></ChildButton>
      </ChildButtons>
    </ChildTitleBar>
    <SunkenEdge>{children}</SunkenEdge>
  </ChildWindow>
);

export default function LTspice() {
  return (
    <App>
      <GlobalStyle />
      <TitleBar>
        <LogoIcon />
        <AppTitle>LTspice XVII - Efilter2m.asc</AppTitle>
        <FrameButtons>
          <FrameButton aria-label="Minimize">
            <svg width="12" height="12" viewBox="0 0 12 12" stroke="#000"><path d="M0 4.500H12" /></svg>
          </FrameButton>
          <FrameButton aria-label="Restore">
            <svg width="13" height="13" viewBox="0 0 13 13" fill="none" stroke="#000" strokeWidth="1.200">
              <rect x="0.700" y="2.700" width="9" height="9" rx="1" />
              <path d="M3 0.700H9.500Q12 1 12 3.500V10" />
            </svg>
          </FrameButton>
          <FrameButton aria-label="Close">
            <svg width="12" height="12" viewBox="0 0 12 12" stroke="#000"><path d="M0 0L12 12M12 0L0 12" /></svg>
          </FrameButton>
        </FrameButtons>
      </TitleBar>
      <MenuBar>
        {menus.map(([name, key]) => (
          <MenuButton key={name}>{name.slice(0, key)}<u>{name[key]}</u>{name.slice(key + 1)}</MenuButton>
        ))}
      </MenuBar>
      <ToolRow>
        <ToolBar>
          <Grip />
          {toolGroups.map((group, i) => (
            <React.Fragment key={group[0]}>
              {i > 0 && <Separator />}
              {group.map((name) => <ToolButton key={name} aria-label={name}>{icons[name]}</ToolButton>)}
            </React.Fragment>
          ))}
        </ToolBar>
      </ToolRow>
      <Client>
        <TabStrip>
          <Tab $active><TransistorIcon size={16} />Efilter2m.asc</Tab>
          <Tab><TraceIcon />Efilter2m.raw</Tab>
        </TabStrip>
        <Workspace>
          <DocumentWindow title="Efilter2m.raw" icon={<WaveformIcon />}>
            <BodePlot />
          </DocumentWindow>
          <DocumentWindow title="Efilter2m.asc" icon={<TransistorIcon size={20} />} active>
            <Canvas><Schematic /></Canvas>
          </DocumentWindow>
        </Workspace>
      </Client>
      <StatusBar />
    </App>
  );
}
